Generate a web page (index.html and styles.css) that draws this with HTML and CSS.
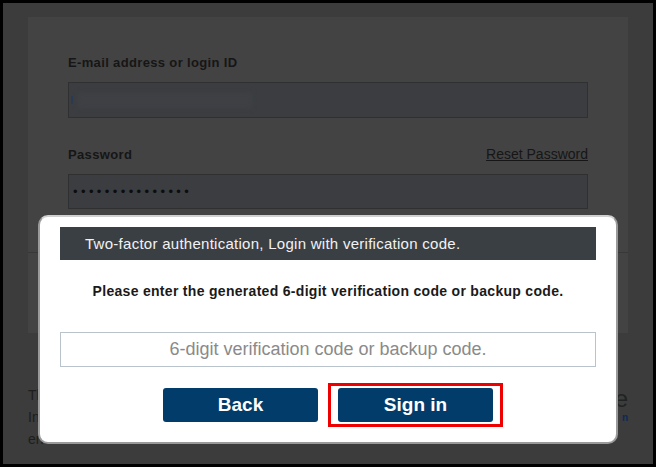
FILE: index.html
```html
<!DOCTYPE html>
<html lang="en">
<head>
<meta charset="utf-8">
<title>Sign in</title>
<link rel="stylesheet" href="styles.css">
</head>
<body>
<div class="page">
  <div class="card">
    <div class="card-main">
      <label class="label">E-mail address or login ID</label>
      <div class="field"><span class="caret"></span><span class="blur"></span></div>
      <div class="label-row">
        <label class="label">Password</label>
        <a class="reset">Reset Password</a>
      </div>
      <div class="field dots">•••••••••••••••</div>
    </div>
    <div class="card-foot"></div>
  </div>
  <div class="below">
    <p class="below-text">Th<br>In<br>en</p>
    <div class="below-right"><span class="big">re</span><span class="small">n</span></div>
  </div>

  <div class="modal">
    <div class="modal-head">Two-factor authentication, Login with verification code.</div>
    <p class="modal-msg">Please enter the generated 6-digit verification code or backup code.</p>
    <input class="code" type="text" placeholder="6-digit verification code or backup code.">
    <div class="actions">
      <button class="btn">Back</button>
      <button class="btn btn-hl">Sign in</button>
    </div>
  </div>
</div>
</body>
</html>
```
FILE: styles.css
```css
* { box-sizing: border-box; }
html, body { margin: 0; padding: 0; }
body {
  width: 656px;
  height: 467px;
  background: #000;
  font-family: "Liberation Sans", Arial, sans-serif;
  overflow: hidden;
}
.page {
  position: relative;
  margin: 3px;
  height: 461px;
  background: #3b3c3b;
  padding: 14px 25px 0 25px;
}
.card {
  width: 600px;
  background: #434343;
}
.card-main {
  padding: 38px 40px 0 40px;
  height: 236px;
  border-bottom: 1px solid #383838;
  display: flex;
  flex-direction: column;
}
.card-foot {
  height: 80px;
}
.label {
  font-size: 13px;
  font-weight: bold;
  color: #161616;
  letter-spacing: 0.35px;
}
.label-row {
  display: flex;
  justify-content: space-between;
  align-items: baseline;
  margin-top: 28px;
}
.reset {
  font-size: 14px;
  color: #161616;
  text-decoration: underline;
}
.field {
  margin-top: 12px;
  height: 36px;
  background: #3b3d40;
  border: 1px solid #2e3032;
  display: flex;
  align-items: center;
  padding-left: 2px;
}
.caret {
  width: 2px;
  height: 8px;
  background: #2a3a55;
}
.blur {
  margin-left: 4px;
  width: 176px;
  height: 17px;
  background: #3e4044;
  border-radius: 4px;
  filter: blur(2px);
}
.dots {
  padding-left: 4px;
  font-size: 13px;
  letter-spacing: 3.4px;
  color: #0d0d0d;
  height: 35px;
}
.below {
  display: flex;
  justify-content: space-between;
  margin-top: 51px;
}
.below-text {
  margin: 0;
  font-size: 14px;
  line-height: 22px;
  color: #1e1e1e;
}
.below-right {
  display: flex;
  flex-direction: column;
  align-items: flex-end;
  padding-top: 2px;
}
.big { font-size: 24px; color: #222; line-height: 26px; }
.small { font-size: 10px; color: #0d2a55; font-weight: bold; line-height: 12px; }

.modal {
  position: absolute;
  left: 35px;
  top: 212px;
  width: 580px;
  height: 229px;
  background: #fff;
  border-radius: 10px;
  border: 2px solid #9a9a9a;
  border-top-color: #d0d0d0;
  padding: 10px 20px 0 20px;
  display: flex;
  flex-direction: column;
}
.modal-head {
  height: 33px;
  background: #3a3f44;
  color: #f2f2f2;
  font-size: 15px;
  letter-spacing: 0.27px;
  line-height: 33px;
  padding-left: 25px;
}
.modal-msg {
  margin: 21px 0 0 0;
  text-align: center;
  font-size: 14px;
  font-weight: bold;
  letter-spacing: 0.3px;
  color: #1a1a1a;
  line-height: 20px;
}
.code {
  margin-top: 31px;
  height: 35px;
  border: 1px solid #b9c3cc;
  font-family: inherit;
  font-size: 18px;
  text-align: center;
  color: #333;
  outline: none;
}
.code::placeholder { color: #8a8a8a; }
.actions {
  display: flex;
  justify-content: center;
  gap: 20px;
  margin-top: 21px;
}
.btn {
  position: relative;
  width: 155px;
  height: 34px;
  background: #013c6a;
  color: #fff;
  border: none;
  border-radius: 3px;
  font-family: inherit;
  font-size: 19px;
  font-weight: bold;
}
.btn-hl::after {
  content: "";
  position: absolute;
  left: -10px;
  right: -10px;
  top: -5px;
  bottom: -5px;
  border: 3px solid #ee0000;
}
```
